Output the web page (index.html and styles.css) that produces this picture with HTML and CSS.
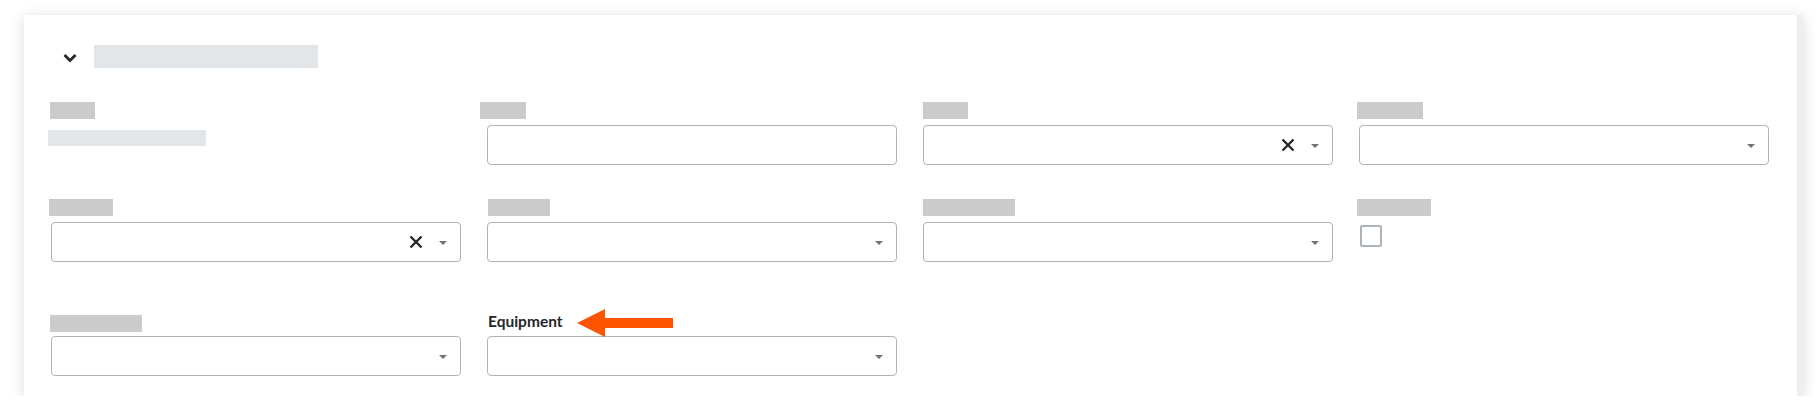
FILE: index.html
```html
<!DOCTYPE html>
<html lang="en">
<head>
<meta charset="utf-8">
<title>Form</title>
<link rel="stylesheet" href="styles.css">
</head>
<body>
<div class="card">
  <div class="header">
    <svg class="chevron" width="14" height="10" viewBox="0 0 14 10"><path d="M1.5 2 L7 7.5 L12.5 2" fill="none" stroke="#232729" stroke-width="2.8"/></svg>
    <div class="title-bar"></div>
  </div>

  <div class="row row1">
    <div class="field">
      <div class="label"><span class="ph w45 s-1"></span></div>
      <div class="value-ph"></div>
    </div>
    <div class="field">
      <div class="label"><span class="ph w46 s-7"></span></div>
      <div class="input"></div>
    </div>
    <div class="field">
      <div class="label"><span class="ph w45"></span></div>
      <div class="input select">
        <svg class="clear" width="14" height="14" viewBox="0 0 14 14"><path d="M1.5 1.5 L12.5 12.5 M12.5 1.5 L1.5 12.5" stroke="#232729" stroke-width="2.4"/></svg>
        <span class="caret"></span>
      </div>
    </div>
    <div class="field">
      <div class="label"><span class="ph w66 s-2"></span></div>
      <div class="input select"><span class="caret"></span></div>
    </div>
  </div>

  <div class="row row2">
    <div class="field">
      <div class="label"><span class="ph w64 s-2"></span></div>
      <div class="input select">
        <svg class="clear" width="14" height="14" viewBox="0 0 14 14"><path d="M1.5 1.5 L12.5 12.5 M12.5 1.5 L1.5 12.5" stroke="#232729" stroke-width="2.4"/></svg>
        <span class="caret"></span>
      </div>
    </div>
    <div class="field">
      <div class="label"><span class="ph w62 s1"></span></div>
      <div class="input select"><span class="caret"></span></div>
    </div>
    <div class="field">
      <div class="label"><span class="ph w92"></span></div>
      <div class="input select"><span class="caret"></span></div>
    </div>
    <div class="field">
      <div class="label"><span class="ph w74 s-2"></span></div>
      <div class="check"></div>
    </div>
  </div>

  <div class="row row3">
    <div class="field">
      <div class="label"><span class="ph w92 s-1"></span></div>
      <div class="input select"><span class="caret"></span></div>
    </div>
    <div class="field equip">
      <div class="label"><span class="label-text">Equipment</span></div>
      <div class="input select"><span class="caret"></span></div>
      <svg class="arrow" width="100" height="30" viewBox="0 0 100 30"><polygon points="0,14 28,0 28,9 96,9 96,19 28,19 28,28" fill="#fe5400"/></svg>
    </div>
  </div>
</div>
</body>
</html>
```

FILE: styles.css
```css
* { box-sizing: border-box; }
html, body { margin: 0; padding: 0; background: #ffffff; }
body {
  font-family: Lato, "Liberation Sans", sans-serif;
  color: #232729;
  padding: 15px 0 0 24px;
}
.card {
  width: 1779px;
  height: 381px;
  background: #ffffff;
  border-right: 6px solid #eceef1;
  box-shadow: 0 2px 14px rgba(0, 0, 0, 0.14);
  padding: 30px 0 20px 27px;
}
.header {
  display: flex;
  align-items: center;
  height: 23px;
  padding-left: 12px;
}
.chevron { display: block; margin-top: 2px; }
.title-bar {
  margin-left: 17px;
  width: 224px;
  height: 23px;
  background: #e3e6e9;
}
.row {
  display: grid;
  grid-template-columns: repeat(4, 410px);
  column-gap: 26px;
}
.row1 { margin-top: 34px; }
.row2 { margin-top: 34px; }
.row3 { margin-top: 53px; }
.field { position: relative; }
.label {
  height: 17px;
  margin-bottom: 6px;
  display: flex;
  align-items: flex-start;
}
.row3 .label { margin-bottom: 4px; }
.ph {
  display: block;
  height: 17px;
  background: #cbcbcb;
}
.w45 { width: 45px; }
.w46 { width: 46px; }
.w62 { width: 62px; }
.w64 { width: 64px; }
.w66 { width: 66px; }
.w74 { width: 74px; }
.w92 { width: 92px; }
.s-1 { margin-left: -1px; }
.s-2 { margin-left: -2px; }
.s-7 { margin-left: -7px; }
.s1 { margin-left: 1px; }
.value-ph {
  margin: 11px 0 0 -3px;
  width: 158px;
  height: 16px;
  background: #e3e6e9;
}
.input {
  height: 40px;
  border: 1px solid #acb4b8;
  border-radius: 4px;
  background: #ffffff;
}
.select {
  display: flex;
  align-items: center;
  justify-content: flex-end;
  gap: 16px;
  padding-right: 13px;
}
.clear { display: block; }
.caret {
  width: 0;
  height: 0;
  border-left: 4px solid transparent;
  border-right: 4px solid transparent;
  border-top: 4px solid #6a757b;
  margin-top: 1px;
}
.check {
  margin-top: 9px;
  margin-left: 1px;
  width: 22px;
  height: 22px;
  border: 2px solid #acb4b8;
  border-radius: 2px;
}
.label-text {
  font-size: 15.5px;
  font-weight: 700;
  line-height: 17px;
  margin-top: -2px;
  margin-left: 1px;
  color: #232729;
}
.arrow {
  position: absolute;
  left: 90px;
  top: -6px;
}
```
